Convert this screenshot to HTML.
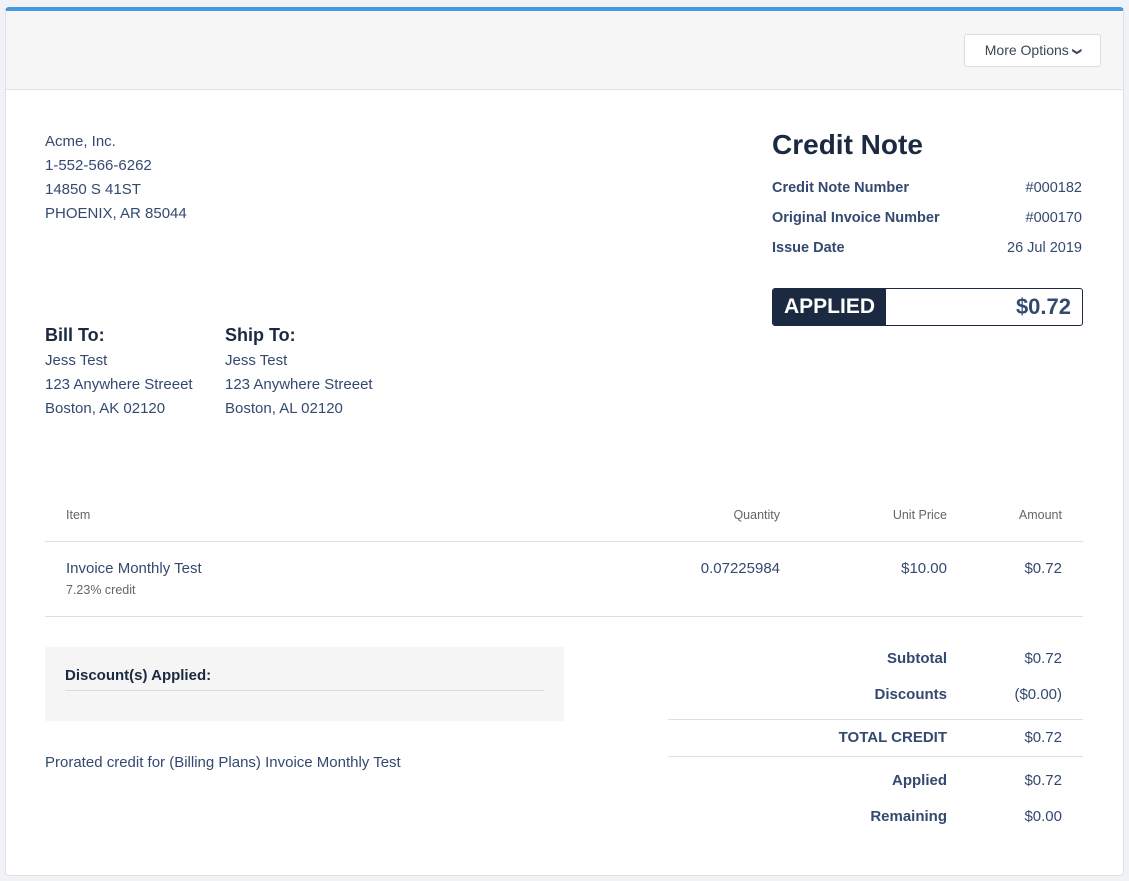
<!DOCTYPE html>
<html><head><meta charset="utf-8"><style>
*{margin:0;padding:0;box-sizing:border-box}
body{width:1129px;height:881px;background:#f1f2f5;font-family:"Liberation Sans",sans-serif;color:#34496f;position:relative;overflow:hidden}
.card{position:absolute;left:5px;top:7px;width:1119px;height:869px;background:#fff;border:1px solid #dfe1e5;border-top:4px solid #4299e1;border-radius:4px;overflow:hidden}
.hdr{position:absolute;left:0;top:0;width:100%;height:79px;background:#f6f6f6;border-bottom:1px solid #e2e2e2}
.btn{position:absolute;left:958px;top:23px;width:137px;height:33px;background:#fff;border:1px solid #dcdcdc;border-radius:3px;font-size:14px;color:#3c4654;line-height:31px;text-align:center}
.a{position:absolute;white-space:nowrap}
.t{font-size:15px;line-height:24px}
.b{font-weight:bold}
.r{text-align:right}
.hl{position:absolute;height:1px;background:#e0e0e0}
</style></head><body>
<div class="card">
<div class="hdr"><div class="btn">More Options <span style="display:inline-block;font-size:9px;font-weight:bold;transform:rotate(90deg);vertical-align:1px">&#10095;</span></div></div>
</div>
<div class="a t" style="left:45px;top:130px">Acme, Inc.<br>1-552-566-6262<br>14850 S 41ST<br>PHOENIX, AR 85044</div>
<div class="a b" style="left:772px;top:129px;font-size:28px;color:#1b2a40">Credit Note</div>
<div class="a b" style="left:772px;top:173px;font-size:14.5px;line-height:30px">Credit Note Number<br>Original Invoice Number<br>Issue Date</div>
<div class="a r" style="right:47px;top:173px;font-size:14.5px;line-height:30px">#000182<br>#000170<br>26 Jul 2019</div>
<div class="a" style="left:772px;top:288px;width:311px;height:38px;border:1px solid #1b2a40;border-radius:3px;overflow:hidden">
<div class="a b" style="left:0;top:0;width:113px;height:36px;background:#1b2a40;color:#fff;font-size:21px;line-height:36px;text-align:center">APPLIED</div>
<div class="a b" style="right:11px;top:0;font-size:22px;line-height:36px;color:#34496f">$0.72</div></div>
<div class="a b" style="left:45px;top:325px;font-size:18px;color:#1b2a40">Bill To:</div>
<div class="a b" style="left:225px;top:325px;font-size:18px;color:#1b2a40">Ship To:</div>
<div class="a t" style="left:45px;top:349px">Jess Test<br>123 Anywhere Streeet<br>Boston, AK 02120</div>
<div class="a t" style="left:225px;top:349px">Jess Test<br>123 Anywhere Streeet<br>Boston, AL 02120</div>
<div class="a" style="left:66px;top:508px;font-size:12.5px;color:#666">Item</div>
<div class="a r" style="right:349px;top:508px;font-size:12.5px;color:#666">Quantity</div>
<div class="a r" style="right:182px;top:508px;font-size:12.5px;color:#666">Unit Price</div>
<div class="a r" style="right:67px;top:508px;font-size:12.5px;color:#666">Amount</div>
<div class="hl" style="left:45px;top:541px;width:1038px"></div>
<div class="a" style="left:66px;top:560px;font-size:15px">Invoice Monthly Test</div>
<div class="a" style="left:66px;top:583px;font-size:12.5px;color:#666">7.23% credit</div>
<div class="a r" style="right:349px;top:560px;font-size:15px">0.07225984</div>
<div class="a r" style="right:182px;top:560px;font-size:15px">$10.00</div>
<div class="a r" style="right:67px;top:560px;font-size:15px">$0.72</div>
<div class="hl" style="left:45px;top:616px;width:1038px"></div>
<div class="a" style="left:45px;top:647px;width:519px;height:74px;background:#f5f5f5"></div>
<div class="a b" style="left:65px;top:667px;font-size:15px;color:#1b2a40">Discount(s) Applied:</div>
<div class="hl" style="left:65px;top:690px;width:479px;background:#dadada"></div>
<div class="a" style="left:45px;top:754px;font-size:15px">Prorated credit for (Billing Plans) Invoice Monthly Test</div>
<div class="a b r" style="right:182px;top:650px;font-size:15px">Subtotal</div>
<div class="a r" style="right:67px;top:650px;font-size:15px">$0.72</div>
<div class="a b r" style="right:182px;top:686px;font-size:15px">Discounts</div>
<div class="a r" style="right:67px;top:686px;font-size:15px">($0.00)</div>
<div class="hl" style="left:668px;top:719px;width:415px"></div>
<div class="a b r" style="right:182px;top:729px;font-size:15px">TOTAL CREDIT</div>
<div class="a r" style="right:67px;top:729px;font-size:15px">$0.72</div>
<div class="hl" style="left:668px;top:756px;width:415px"></div>
<div class="a b r" style="right:182px;top:772px;font-size:15px">Applied</div>
<div class="a r" style="right:67px;top:772px;font-size:15px">$0.72</div>
<div class="a b r" style="right:182px;top:808px;font-size:15px">Remaining</div>
<div class="a r" style="right:67px;top:808px;font-size:15px">$0.00</div>
</body></html>
